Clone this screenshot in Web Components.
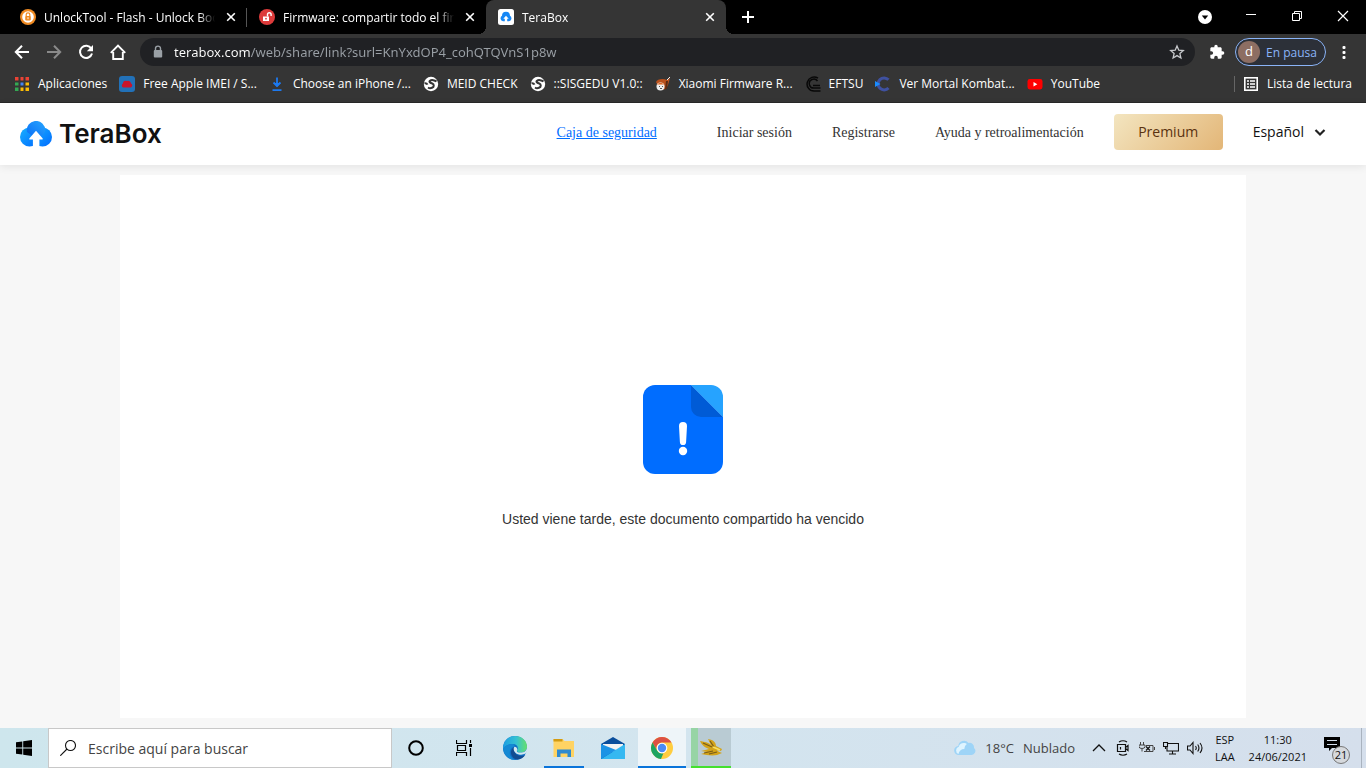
<!DOCTYPE html>
<html lang="es">
<head>
<meta charset="utf-8">
<meta name="viewport" content="width=device-width, initial-scale=1">
<title>TeraBox</title>
<style>
  html, body { margin: 0; height: 100%; }
  body {
    --ui: "Open Sans", "Noto Sans", sans-serif;
    display: flex; flex-direction: column; min-height: 100vh;
    font-family: var(--ui); font-size: 12px; background: #f7f7f7; overflow: hidden;
  }
  share-page { flex: 1; }
</style>
</head>
<body>
<browser-chrome></browser-chrome>
<share-page></share-page>
<task-bar></task-bar>

<script>
const ICONS = {
  unlock: ['0 0 16 16', '<circle cx="8" cy="8" r="8" fill="#ef8a22"/><circle cx="8" cy="8" r="5.8" fill="#fff"/><rect x="5.2" y="7" width="5.6" height="4.4" rx=".8" fill="#ef8a22"/><path d="M6.2 7V5.6a1.8 1.8 0 0 1 3.6 0V7" fill="none" stroke="#ef8a22" stroke-width="1.2"/><path d="M8 8.2v2" stroke="#fff"/>'],
  firmware: ['0 0 16 16', '<circle cx="8" cy="8" r="8" fill="#dd3b3b"/><rect x="4" y="7.5" width="6" height="4.5" fill="#fff"/><path d="M8.5 7.5V5.6a1.8 1.8 0 0 1 3.6 0V7" fill="none" stroke="#fff" stroke-width="1.4"/><circle cx="7" cy="9.7" r=".9" fill="#dd3b3b"/>'],
  teratab: ['0 0 16 16', '<rect width="16" height="16" rx="2.5" fill="#fff"/><path d="M5 12.3A3 3 0 0 1 4 6.8a4 4 0 0 1 8 0 3 3 0 0 1-1 5.500H9.200V9.800h1.500L8 6.800 5.300 9.800h1.500v2.500z" fill="#1687f5"/>'],
  close: ['0 0 16 16', '<path d="M4.200 4.200l7.600 7.600M11.800 4.200l-7.600 7.600" stroke="#fff" stroke-width="1.600"/>'],
  plus: ['0 0 16 16', '<path d="M8 2v12M2 8h12" stroke="#fff" stroke-width="2"/>'],
  tabsearch: ['0 0 16 16', '<circle cx="8" cy="8" r="7" fill="#fff"/><path d="M4.800 6.400h6.400L8 10.400z" fill="#000"/>'],
  min: ['0 0 16 16', '<path d="M3 5.500h10" stroke="#fff"/>'],
  restore: ['0 0 16 16', '<path d="M3.500 4.500h7v7h-7zM5.500 4.500v-2h7v7h-2" fill="none" stroke="#fff"/>'],
  winclose: ['0 0 16 16', '<path d="M3 2l10 10M13 2L3 12" stroke="#fff" stroke-width="1.200"/>'],
  back: ['0 0 16 16', '<path d="M15 8H2.500M8 1.800L1.800 8 8 14.200" fill="none" stroke="#fff" stroke-width="2"/>'],
  forward: ['0 0 16 16', '<path d="M1 8h12.500M8 1.800L14.200 8 8 14.200" fill="none" stroke="#8a8a8a" stroke-width="2"/>'],
  reload: ['0 0 16 16', '<path d="M13.300 4.600A6.100 6.100 0 1 0 14 9.500" fill="none" stroke="#fff" stroke-width="2"/><path d="M15 1v6.200H8.800z" fill="#fff"/>'],
  home: ['0 0 16 16', '<path d="M.8 8.800L8 1.500l7.200 7.300M3.200 8v7h9.600V8" fill="none" stroke="#fff" stroke-width="1.900"/>'],
  lock: ['0 0 16 16', '<rect x="3.800" y="6" width="8.400" height="7.500" rx="1" fill="#9aa0a6"/><path d="M5.500 6.500V4.600a2.500 2.500 0 0 1 5 0v2" fill="none" stroke="#9aa0a6" stroke-width="1.400"/>'],
  star: ['0 0 16 16', '<path d="M8 2l1.800 4.200 4.500.4-3.400 3 1 4.400L8 11.600 4.100 14l1-4.400-3.400-3 4.500-.4z" fill="none" stroke="#c8cacd" stroke-width="1.300"/>'],
  puzzle: ['0 0 24 24', '<path d="M20.500 11H19V7c0-1.100-.9-2-2-2h-4V3.500a2.500 2.500 0 0 0-5 0V5H4c-1.100 0-2 .9-2 2v3.800h1.500a2.700 2.700 0 0 1 0 5.400H2V20c0 1.100.9 2 2 2h3.800v-1.500a2.700 2.700 0 0 1 5.400 0V22H17c1.100 0 2-.9 2-2v-4h1.500a2.500 2.500 0 0 0 0-5z" fill="#fff"/>'],
  dots: ['0 0 16 16', '<g fill="#fff"><rect x="6.500" y="2" width="3" height="3" rx="1"/><rect x="6.500" y="7" width="3" height="3" rx="1"/><rect x="6.500" y="12" width="3" height="3" rx="1"/></g>'],
  apps: ['0 0 16 16', '<g fill="#ea4335"><path d="M1 1h4v4H1zM6 1h4v4H6zM11 1h4v4h-4z"/></g><path d="M1 6h4v4H1zM1 11h4v4H1z" fill="#34a853"/><path d="M6 6h4v4H6z" fill="#4285f4"/><path d="M11 6h4v4h-4zM6 11h4v4H6zM11 11h4v4h-4z" fill="#fbbc05"/><path d="M5.500 0v16M10.500 0v16M0 5.500h16M0 10.500h16" stroke="#353535" stroke-width="2"/>'],
  imei: ['0 0 16 16', '<rect width="16" height="16" rx="3" fill="#2271b8"/><path d="M4.300 11.500a2.200 2.200 0 0 1-.4-4A2.800 2.800 0 0 1 8 5a2.800 2.800 0 0 1 4 2.400 2.200 2.200 0 0 1-.3 4.100z" fill="#c9142b"/>'],
  download: ['0 0 16 16', '<path d="M8 1.500v8M4.500 6.500L8 10l3.500-3.500M3.500 14.200h9" fill="none" stroke="#1d79ee" stroke-width="1.800"/><path d="M4.500 7h7L8 11z" fill="#1d79ee"/>'],
  globe: ['0 0 16 16', '<circle cx="8" cy="8" r="7.200" fill="#fff"/><path d="M13.500 5.500c-1.500-1.300-5-2-6.500-.8-1.600 1.300.8 2.300 2.300 2.800 2 .7 2 3.500-.3 4.300-1.500.6-3 .4-4-.3M1.500 7.200c1.500-.2 2.500.3 3 1.500" fill="none" stroke="#353535" stroke-width="2"/>'],
  xiaomi: ['0 0 16 16', '<path d="M1 6c1-3 7-4 11-2l3-2-2 7-2 4-6 1z" fill="#b9501b"/><path d="M12 4l3-3" stroke="#eee"/><circle cx="5.500" cy="10.500" r="4" fill="#eee"/><path d="M2 8.500c1-2 6-2 7 0z" fill="#e0651e"/><path d="M4 10.500h1M7 10.500h1M5 12.500h2" stroke="#555"/><path d="M12 5l-1 8" stroke="#5a2a14" stroke-width="2"/>'],
  eftsu: ['0 0 16 16', '<path d="M13 2.200A7 7 0 1 0 9 15h6.500M12.500 5A4.500 4.500 0 1 0 9.500 12h6M8 9.500h7" fill="none" stroke="#080808" stroke-width="1.500"/>'],
  kombat: ['0 0 16 16', '<path d="M13.500 3.800A6 6 0 1 0 13.500 12" fill="none" stroke="#3f51a0" stroke-width="3"/><path d="M0 5L5.500 8 0 11z" fill="#1a8cff"/>'],
  youtube: ['0 0 16 16', '<rect x=".5" y="3" width="15" height="10.500" rx="2.400" fill="#f00"/><path d="M6.500 6v4.500L10.300 8.200z" fill="#fff"/>'],
  reading: ['0 0 16 16', '<rect x="1.800" y="1.800" width="12.400" height="12.400" fill="none" stroke="#fff" stroke-width="1.600"/><path d="M4 5h2M7 5h5M4 8h2M7 8h5M4 11h2M7 11h5" stroke="#fff" stroke-width="1.500"/>'],
  terabox: ['0 0 32 26', '<defs><linearGradient id="g" x1="0" y1="0" x2="1" y2="1"><stop stop-color="#18b1ff"/><stop offset="1" stop-color="#006aff"/></linearGradient><linearGradient id="h" x1="0" y1="1" x2="1" y2="0"><stop stop-color="#0a6cf5"/><stop offset="1" stop-color="#27a6ff"/></linearGradient></defs><circle cx="9.500" cy="16" r="9.500" fill="url(#g)"/><circle cx="22.500" cy="16" r="9.500" fill="url(#g)"/><path d="M7 11a9.200 9.200 0 1 1 18.200-1.500C24 15 18 18 14 16z" fill="url(#h)"/><path d="M16 9.800l6.500 7.400c.6.800.2 1.300-.6 1.300h-2.500V26h-6.500v-7.500h-2.800c-.9 0-1.200-.6-.6-1.300z" fill="#fff"/>'],
  chevron: ['0 0 12 12', '<path d="M1.500 4L6 8.500 10.500 4" fill="none" stroke="#222" stroke-width="2.200"/>'],
  document: ['0 0 80 90', '<path d="M12 0h36l32 32v45a12 12 0 0 1-12 12H12A12 12 0 0 1 0 77V12A12 12 0 0 1 12 0z" fill="#006dff"/><path d="M48 0v22a10 10 0 0 0 10 10h22z" fill="#005bd6"/><path d="M48 0h20a12 12 0 0 1 12 12v20z" fill="#26a3ff"/><path d="M36 41a4 4 0 0 1 8 0l-.9 16a3.100 3.100 0 0 1-6.200 0z" fill="#fff"/><circle cx="40" cy="66" r="4.200" fill="#fff"/>'],
  windows: ['0 0 16 16', '<path d="M0 2.200L6.300 1.400v6.100H0zM7.200 1.200L16 0v7.500H7.200zM0 8.400h6.300v6.100L0 13.700zM7.200 8.400H16V16l-8.800-1.300z"/>'],
  search: ['0 0 16 16', '<circle cx="10.500" cy="5.500" r="5" fill="none" stroke="#111" stroke-width="1.100"/><path d="M7 9L.3 15.700" stroke="#111" stroke-width="1.100"/>'],
  cortana: ['0 0 16 16', '<circle cx="8" cy="8" r="6.800" fill="none" stroke="#000" stroke-width="2"/>'],
  taskview: ['0 0 16 16', '<path d="M.5 0v3.500h10V0M.5 16v-3.500h10V16M1.500 5.500h8v5h-8zM14.500 0v3M14.500 8v8" fill="none" stroke="#000" stroke-width="1.200"/><path d="M13 4h3v3h-3z"/>'],
  edge: ['0 0 24 24', '<defs><linearGradient id="g"><stop stop-color="#1b9de2"/><stop offset=".55" stop-color="#35c1d3"/><stop offset="1" stop-color="#67e06b"/></linearGradient></defs><circle cx="12" cy="12" r="12" fill="#0f6fc5"/><path d="M0 11C1 4 6 0 12 0c7 0 12 5 12 10.500 0 4-3 6-6.500 6-3 0-4-1.200-3.300-2.300 1.700-2.500 0-6.200-4.700-6.200C5 8 1 10 0 14z" fill="url(#g)"/><path d="M9.500 8C3 8 0 12 0 13c1 6 6 11 12 11-4-2-6-5-5-9 .6-2.600 2-4 4.500-4.500C11.700 9 11 8 9.500 8z" fill="#1489d4"/><path d="M11 11c-4.500 3-4 9 1 12 4 1.300 8-.5 10.300-4-5 2.300-12.300.4-11.300-8z" fill="#134b91"/><path d="M11.500 10.700c-2 2.300-.3 6.800 4.300 7.800 3 .7 5-.1 6.500-.9.700-.3.900.2.600.7C24.500 16 24 12 24 11c0 4-3 5.600-6.500 5.600-3 0-4.200-1.100-3.400-2.300.8-1.500-.7-3.600-2.600-3.600z" fill="#d2e7f0"/>'],
  explorer: ['0 0 24 24', '<path d="M1.500 3h9l2 2H22v16H1.500z" fill="#ffd363"/><path d="M1.500 3h9v2.500h-9z" fill="#d39b12"/><path d="M5 21v-7.500h14V21h-3.500v-3.500h-7V21z" fill="#2e8ad0"/>'],
  mail: ['0 0 24 24', '<path d="M0 8L12 1l12 7v15H0z" fill="#0a4e9c"/><path d="M2 8h20v8H2z" fill="#f3f3f3"/><path d="M24 8L0 23h24z" fill="#35b8f1"/><path d="M0 8l15 6L0 23z" fill="#1c93e5"/>'],
  chrome: ['0 0 24 24', '<circle cx="12" cy="12" r="11" fill="#ffcd40"/><path d="M2.500 6.500A11 11 0 0 1 21.500 6.500H12a5.500 5.500 0 0 0-5 8z" fill="#dd5144"/><path d="M2.500 6.500l4.700 8.200a5.500 5.500 0 0 0 6.200 2.600L11 23A11 11 0 0 1 2.500 6.500z" fill="#1da462"/><circle cx="12" cy="12" r="5.300" fill="#fff"/><circle cx="12" cy="12" r="4.200" fill="#4c8bf5"/>'],
  dragon: ['0 0 24 24', '<path d="M1 5c5 1 8 1 11 4l-3-6c6 1 8 4 8 7l6 3-1 2-4-1c1 2 4 2 5 3l-5 2c-5 1-11 0-16-1l6-2-6-1 8-2C5 11 3 9 1 5z" fill="#d3a319"/><path d="M4 7l9 4M11 5l4 6M5 17l9-2M10 18l8-2" stroke="#795c18" stroke-width="1.200"/><path d="M14 11l7 3" stroke="#f7df60" stroke-width="1.500"/>'],
  cloud: ['0 0 22 18', '<path d="M5 16a4.500 4.500 0 0 1-.7-9A5.700 5.700 0 0 1 14.500 4 4.500 4.500 0 0 1 20 9a4 4 0 0 1-3 7z" fill="#9ed4f7"/><path d="M4.500 15a3.800 3.800 0 0 1 .3-7.200 5 5 0 0 1 8-2.800 6 6 0 0 0-2.500 5C7 10 5 12 4.500 15z" fill="#dff4ff"/>'],
  up: ['0 0 16 16', '<path d="M2 11l6-6 6 6" fill="none" stroke="#111" stroke-width="1.300"/>'],
  meet: ['0 0 16 16', '<path d="M2.500 4.500h8v7h-8zM10.500 7.500l2.500-2v5l-2.500-2M5.500 7v2.500" fill="none" stroke="#111" stroke-width="1.200"/><path d="M4 2q4-2.500 8 0M4 14q4 2.500 8 0" fill="none" stroke="#111" stroke-width="1.200"/>'],
  battery: ['0 0 16 16', '<path d="M1.500 2v3M4.500 2v3M0 5h6v1.500a3 2 0 0 1-6 0V5M3 8.500v3M7 5.500h7v6H5M15.500 7v3" fill="none" stroke="#444"/><path d="M7 6.500l4 4M11 6.500l-4 4" stroke="#111" stroke-width="1.200"/>'],
  network: ['0 0 16 16', '<path d="M5 3.500h10.500V11H4V7M9.500 11v3M6 14h7M.5 2.500h4v4h-4zM2.500 6.500V9" fill="none" stroke="#111" stroke-width="1.100"/>'],
  sound: ['0 0 16 16', '<path d="M.5 6h2.500l3-3.500v11L3 10H.5zM8.500 6q1.500 2 0 4M10.700 4.500q2.500 3.500 0 7M13 3q4 5 0 10" fill="none" stroke="#111" stroke-width="1.100"/>'],
  notice: ['0 0 16 16', '<path d="M0 1h16v11H8l-3 3v-3H0z" fill="#000"/><path d="M3 4.500h10M3 8.500h10" stroke="#d5dfec"/>']
};

function define(name, css, html, setup) {
  const tpl = document.createElement('template');
  tpl.innerHTML = `<style>*{box-sizing:border-box}button,input,select{font:inherit;color:inherit;background:none;border:0;padding:0;margin:0;outline:0}button{display:flex;align-items:center;justify-content:center;flex:none}a{color:inherit;text-decoration:none}${css}</style>${html}`;
  customElements.define(name, class extends HTMLElement {
    constructor() {
      super();
      this.attachShadow({ mode: 'open' }).append(tpl.content.cloneNode(true));
    }
    connectedCallback() { if (setup) setup.call(this, this.shadowRoot); }
  });
}

define('ui-icon', `:host{display:block;flex:none;width:16px;height:16px}svg{display:block;width:100%;height:100%}`,
  `<svg aria-hidden="true"></svg>`, function (root) {
    const [box, body] = ICONS[this.getAttribute('name')];
    const svg = root.querySelector('svg');
    svg.setAttribute('viewBox', box);
    svg.innerHTML = body;
  });

define('browser-tab', `
  :host{display:block;flex:0 1 239px;min-width:0;height:34px;position:relative;color:#fff}
  .tab{display:flex;align-items:center;gap:8px;height:100%;padding:0 8px 0 12px}
  .title{flex:1;min-width:0;overflow:hidden;white-space:nowrap;-webkit-mask-image:linear-gradient(90deg,#000 calc(100% - 16px),transparent)}
  :host([divided])::after{content:"";position:absolute;right:0;top:8px;width:1px;height:19px;background:#555}
  :host([active]){background:#353535;border-radius:8px 8px 0 0;flex-basis:240px}
  :host([active])::before,:host([active])::after{content:"";position:absolute;bottom:0;width:8px;height:8px}
  :host([active])::before{left:-8px;background:radial-gradient(circle at 0 0,transparent 8px,#353535 8px)}
  :host([active])::after{right:-8px;background:radial-gradient(circle at 100% 0,transparent 8px,#353535 8px)}
`, `<div class="tab"><slot name="icon"></slot><span class="title"><slot></slot></span><button aria-label="Cerrar pestaña"><ui-icon name="close"></ui-icon></button></div>`);

define('bookmark-link', `
  :host{display:block;flex:none;color:#fff}
  a{display:flex;align-items:center;gap:8px;white-space:nowrap;line-height:16px}
`, `<a href="#"><slot name="icon"></slot><span><slot></slot></span></a>`);

define('browser-chrome', `
  :host{display:block;background:#353535;color:#fff;border-bottom:1px solid #282828;font-size:12px}
  .strip{display:flex;align-items:center;height:34px;background:#000;padding-left:8px}
  .new{width:16px;margin-left:14px}
  .window{display:flex;align-items:center;margin-left:auto;gap:30px;padding-right:15px}
  .bar{display:flex;align-items:center;height:36px;padding:0 14px}
  .nav{display:flex;gap:16px;margin-right:14px}
  .omni{flex:1;display:flex;align-items:center;gap:8px;height:28px;border-radius:14px;background:#202124;padding:0 10px;margin-right:14px}
  .omni input{flex:1;min-width:0;height:24px;font-family:"Noto Sans",sans-serif;font-size:13px;background:linear-gradient(90deg,#fff 76px,#9aa0a6 76px);-webkit-background-clip:text;background-clip:text;-webkit-text-fill-color:transparent}
  .profile{height:28px;border:1px solid #8ab4f8;border-radius:14px;background:#2c3038;color:#8ab4f8;gap:6px;padding:0 8px 0 2px;margin:0 10px}
  .avatar{width:22px;height:22px;border-radius:50%;background:#8d6e63;color:#fff;line-height:21px;font-size:13px}
  .marks{display:flex;align-items:center;gap:12px;height:32px;padding:0 14px 4px}
  .reading{display:flex;align-items:center;margin-left:auto;padding-left:8px;border-left:1px solid #666;height:16px}
`, `
  <div class="strip" role="tablist">
    <browser-tab divided><ui-icon slot="icon" name="unlock"></ui-icon>UnlockTool - Flash - Unlock Bootloader</browser-tab>
    <browser-tab><ui-icon slot="icon" name="firmware"></ui-icon>Firmware: compartir todo el firmware</browser-tab>
    <browser-tab active><ui-icon slot="icon" name="teratab"></ui-icon>TeraBox</browser-tab>
    <button class="new" aria-label="Nueva pestaña"><ui-icon name="plus"></ui-icon></button>
    <div class="window">
      <button aria-label="Buscar pestañas"><ui-icon name="tabsearch"></ui-icon></button>
      <button aria-label="Minimizar"><ui-icon name="min"></ui-icon></button>
      <button aria-label="Restaurar"><ui-icon name="restore"></ui-icon></button>
      <button aria-label="Cerrar"><ui-icon name="winclose"></ui-icon></button>
    </div>
  </div>
  <div class="bar">
    <div class="nav">
      <button aria-label="Atrás"><ui-icon name="back"></ui-icon></button>
      <button aria-label="Adelante"><ui-icon name="forward"></ui-icon></button>
      <button aria-label="Recargar"><ui-icon name="reload"></ui-icon></button>
      <button aria-label="Inicio"><ui-icon name="home"></ui-icon></button>
    </div>
    <div class="omni">
      <ui-icon name="lock"></ui-icon>
      <input type="text" aria-label="Dirección" value="terabox.com/web/share/link?surl=KnYxdOP4_cohQTQVnS1p8w">
      <button aria-label="Añadir a favoritos"><ui-icon name="star"></ui-icon></button>
    </div>
    <button aria-label="Extensiones"><ui-icon name="puzzle"></ui-icon></button>
    <button class="profile"><span class="avatar">d</span>En pausa</button>
    <button aria-label="Menú"><ui-icon name="dots"></ui-icon></button>
  </div>
  <nav class="marks">
    <bookmark-link><ui-icon slot="icon" name="apps"></ui-icon>Aplicaciones</bookmark-link>
    <bookmark-link><ui-icon slot="icon" name="imei"></ui-icon>Free Apple IMEI / S...</bookmark-link>
    <bookmark-link><ui-icon slot="icon" name="download"></ui-icon>Choose an iPhone /...</bookmark-link>
    <bookmark-link><ui-icon slot="icon" name="globe"></ui-icon>MEID CHECK</bookmark-link>
    <bookmark-link><ui-icon slot="icon" name="globe"></ui-icon>::SISGEDU V1.0::</bookmark-link>
    <bookmark-link><ui-icon slot="icon" name="xiaomi"></ui-icon>Xiaomi Firmware R...</bookmark-link>
    <bookmark-link><ui-icon slot="icon" name="eftsu"></ui-icon>EFTSU</bookmark-link>
    <bookmark-link><ui-icon slot="icon" name="kombat"></ui-icon>Ver Mortal Kombat...</bookmark-link>
    <bookmark-link><ui-icon slot="icon" name="youtube"></ui-icon>YouTube</bookmark-link>
    <div class="reading"><bookmark-link><ui-icon slot="icon" name="reading"></ui-icon>Lista de lectura</bookmark-link></div>
  </nav>`);

define('site-header', `
  :host{display:flex;align-items:center;justify-content:space-between;height:62px;background:#fff;padding:0 40px 0 20px;box-shadow:0 2px 8px rgba(0,0,0,.08);position:relative}
  .brand{display:flex;align-items:center;gap:7px;font:600 26px/32px Inter,sans-serif;color:#111}
  .brand ui-icon{width:32px;height:26px}
  nav{display:flex;align-items:baseline;gap:40px;padding-bottom:4px;font:14px/20px "Liberation Serif",serif;color:#333;white-space:nowrap}
  .safe{color:#006dff;text-decoration:underline;margin-right:20px}
  .tools{display:flex;align-items:baseline;gap:30px;margin-left:-10px;font:14px/20px var(--ui)}
  .premium{width:109px;height:36px;border-radius:4px;background:linear-gradient(135deg,#f3e5c0,#e3b677);color:#5a3210}
  label{display:flex;align-items:center;gap:10px;color:#111}
  select{appearance:none;field-sizing:content;line-height:20px}
  label ui-icon{width:12px;height:12px}
`, `
  <a class="brand" href="#"><ui-icon name="terabox"></ui-icon>TeraBox</a>
  <nav>
    <a class="safe" href="#">Caja de seguridad</a>
    <a href="#">Iniciar sesión</a>
    <a href="#">Registrarse</a>
    <a href="#">Ayuda y retroalimentación</a>
    <div class="tools">
      <button class="premium">Premium</button>
      <label><select aria-label="Idioma"><option>Español</option></select><ui-icon name="chevron"></ui-icon></label>
    </div>
  </nav>`);

define('share-page', `
  :host{display:flex;flex-direction:column;min-height:0;background:#f7f7f7}
  main{flex:1;display:flex;flex-direction:column;align-items:center;justify-content:center;gap:34px;margin:10px 120px;padding-top:20px;background:#fff}
  ui-icon{width:80px;height:90px}
  p{margin:0;font:14px/20px "Liberation Sans",sans-serif;color:#333}
`, `<site-header></site-header>
  <main><ui-icon name="document"></ui-icon><p>Usted viene tarde, este documento compartido ha vencido</p></main>`);

define('task-button', `
  :host{display:flex;flex:none;width:48px;height:40px;border-bottom:2px solid transparent;padding-top:2px}
  :host([running]){width:40px;margin:0 4px;border-color:#0a74da}
  :host([active]){background:#eef5f9;border-color:#0a74da}
  :host([alert]){width:40px;margin-left:4px;border-color:#44e02e;background:linear-gradient(90deg,#97d4a5 7px,#b9cbd3 7px)}
  button{width:100%;height:100%}
`, `<button><slot></slot></button>`);

define('task-bar', `
  :host{display:flex;align-items:center;height:40px;flex:none;background:linear-gradient(90deg,#cee6ed,#d3e5ef 50%,#d5dfec);color:#111;font-size:12px}
  .start{width:48px;height:40px}
  .search{display:flex;align-items:center;gap:12px;flex:0 1 344px;height:40px;padding:0 11px;background:#fff;border:1px solid #c8c8c8}
  .search input{flex:1;min-width:0;font-size:14px}
  .search input::placeholder{color:#444;opacity:1}
  .apps{display:flex;gap:1px;margin-left:3px}
  .system{display:flex}
  .big{width:24px;height:24px}
  .tray{display:flex;align-items:center;margin-left:auto;height:100%}
  .weather{gap:9px;font-size:13px;color:#444;margin-right:16px}
  .weather ui-icon{width:22px;height:18px}
  .icons{display:flex;gap:8px;margin-right:12px}
  .stack{flex-direction:column;line-height:17px;font-size:11px}
  .clock{margin:0 17px 0 14px}
  .notice{position:relative;width:26px;height:24px;justify-content:flex-start;align-items:flex-start}
  .notice ui-icon{width:16px;height:16px}
  .badge{position:absolute;right:0;bottom:-4px;width:18px;height:18px;border-radius:50%;border:1px solid #777;background:#d6d9dd;font-size:11px;line-height:16px;text-align:center}
  .desk{width:5px;height:100%;border-left:1px solid #a9b3bf;margin-left:11px}
`, `
  <button class="start" aria-label="Inicio"><ui-icon name="windows"></ui-icon></button>
  <label class="search"><ui-icon name="search"></ui-icon><input type="search" placeholder="Escribe aquí para buscar" aria-label="Buscar"></label>
  <div class="system">
    <task-button><ui-icon name="cortana"></ui-icon></task-button>
    <task-button><ui-icon name="taskview"></ui-icon></task-button>
  </div>
  <div class="apps">
    <task-button><ui-icon class="big" name="edge"></ui-icon></task-button>
    <task-button running><ui-icon class="big" name="explorer"></ui-icon></task-button>
    <task-button><ui-icon class="big" name="mail"></ui-icon></task-button>
    <task-button active><ui-icon class="big" name="chrome"></ui-icon></task-button>
    <task-button alert><ui-icon class="big" name="dragon"></ui-icon></task-button>
  </div>
  <div class="tray">
    <button class="weather"><ui-icon name="cloud"></ui-icon><span>18°C</span><span>Nublado</span></button>
    <div class="icons">
      <ui-icon name="up"></ui-icon><ui-icon name="meet"></ui-icon><ui-icon name="battery"></ui-icon><ui-icon name="network"></ui-icon><ui-icon name="sound"></ui-icon>
    </div>
    <button class="stack"><span>ESP</span><span>LAA</span></button>
    <button class="stack clock"><span>11:30</span><span>24/06/2021</span></button>
    <button class="notice" aria-label="Notificaciones"><ui-icon name="notice"></ui-icon><span class="badge">21</span></button>
    <div class="desk"></div>
  </div>`);
</script>
</body>
</html>
